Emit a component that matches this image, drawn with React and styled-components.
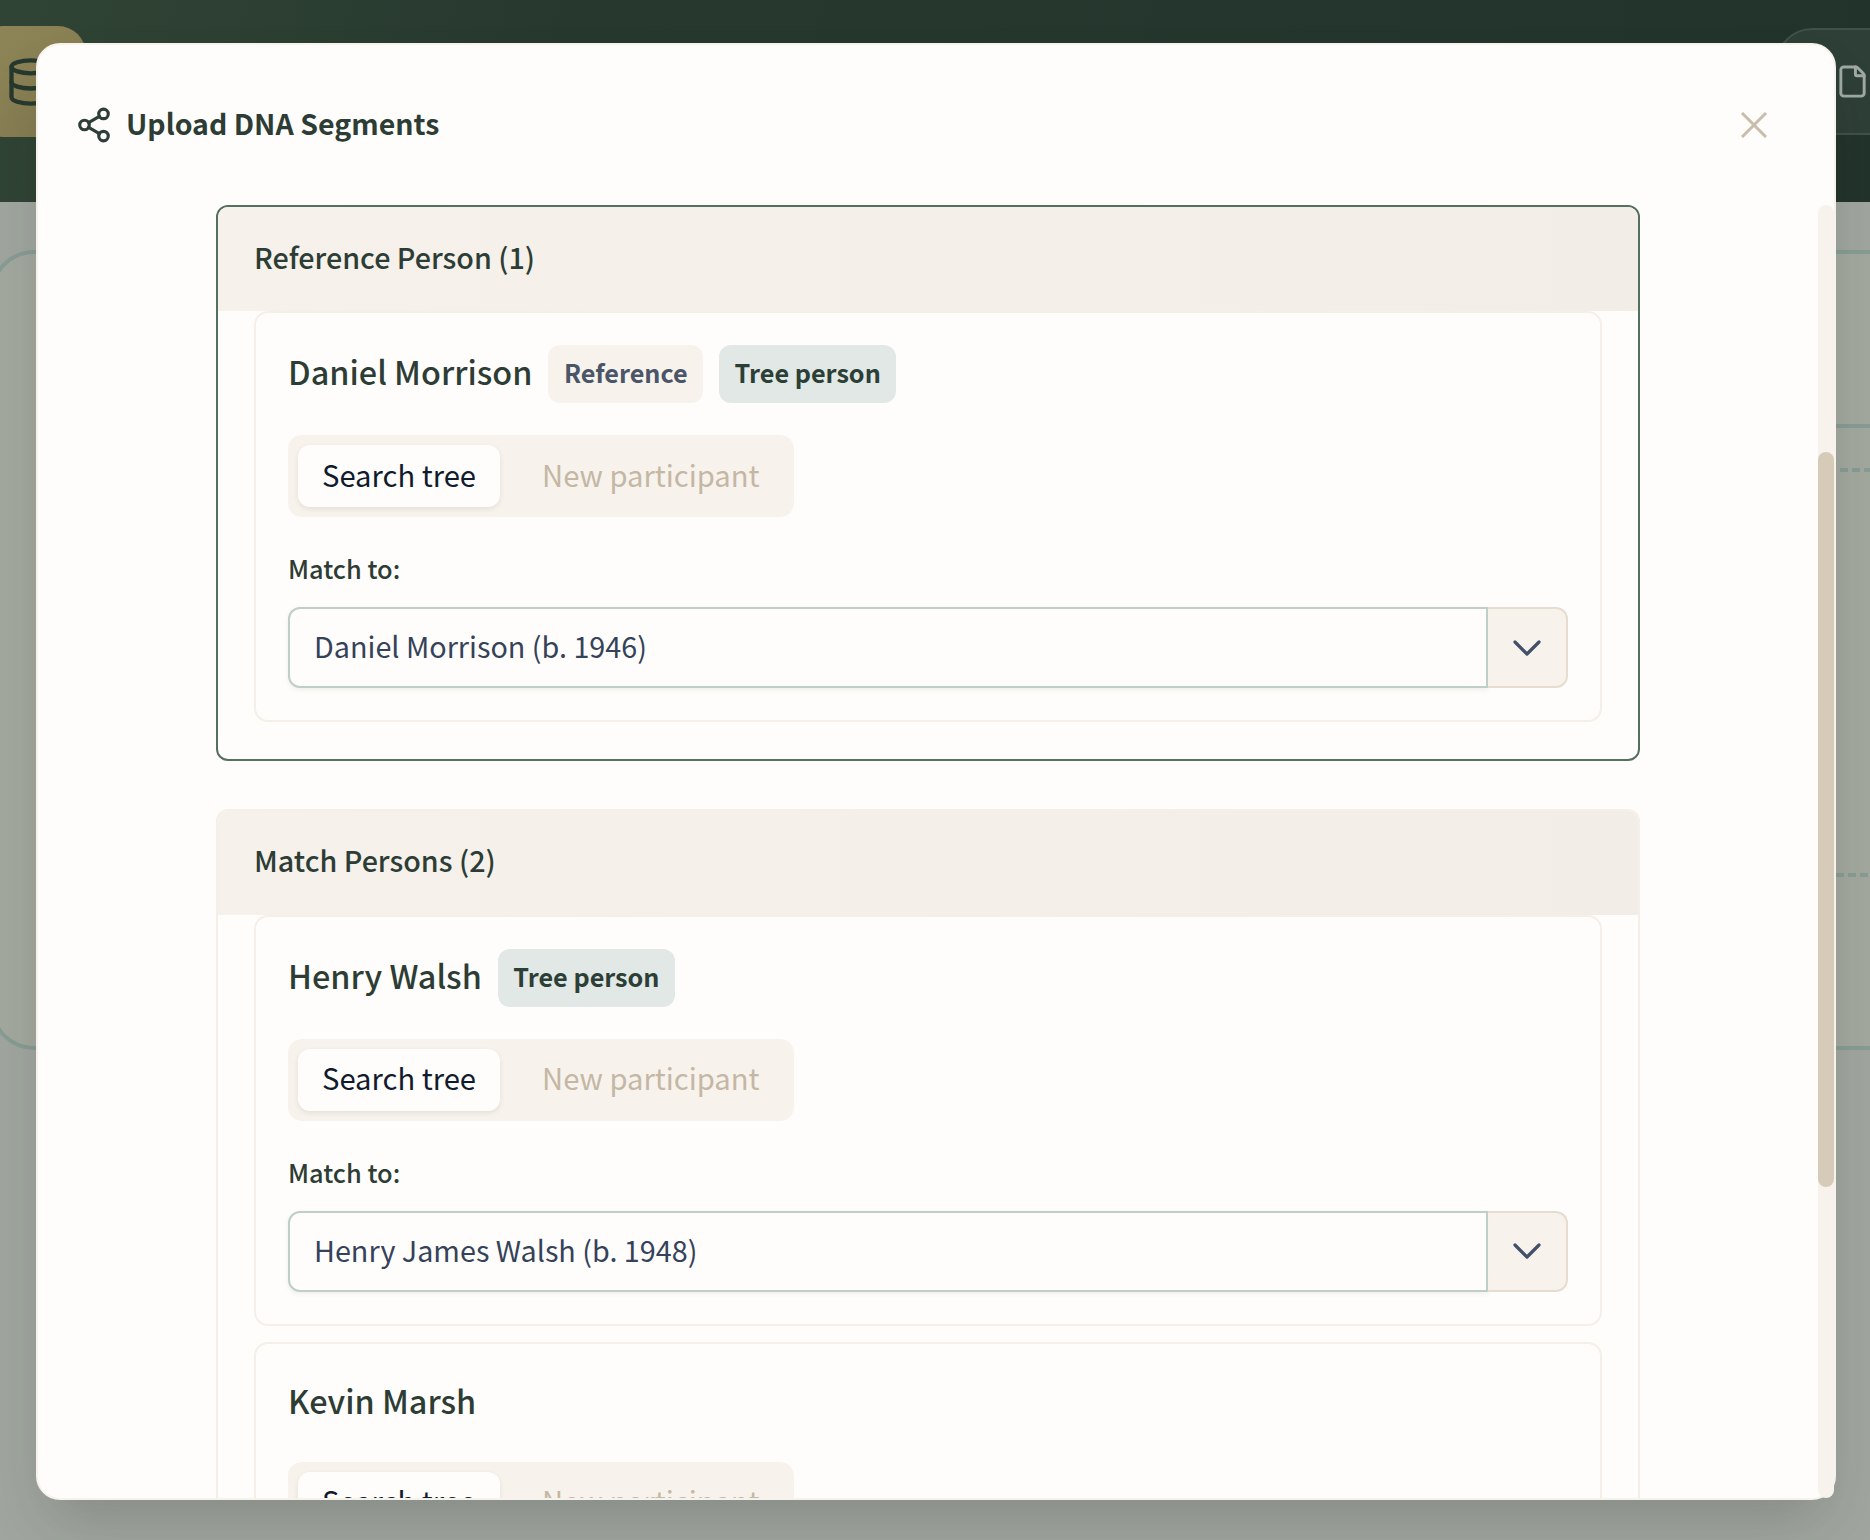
import React from "react";
import styled, { createGlobalStyle } from "styled-components";
import { ChevronDown, Database, File, Share2 } from "lucide-react";

const GlobalStyle = createGlobalStyle`
  * {
    margin: 0;
    padding: 0;
    box-sizing: border-box;
  }
  html, body {
    width: 100%;
    height: 100%;
    overflow: hidden;
    background: #a0a69f;
    font-family: "Noto Sans CJK SC", "Noto Sans", sans-serif;
  }
`;

const Page = styled.div`
  position: relative;
  width: 1870px;
  height: 1540px;
  overflow: hidden;
  background: #a0a69f;
`;

const TopBar = styled.header`
  display: flex;
  align-items: flex-start;
  justify-content: space-between;
  height: 202px;
  padding-top: 26px;
  background: linear-gradient(100deg, #304435 0%, #27392f 30%, #22332b 100%);
`;

const BrandTile = styled.div`
  display: flex;
  align-items: center;
  justify-content: center;
  flex: none;
  width: 111px;
  height: 111px;
  margin-left: -25px;
  border-radius: 28px;
  background: linear-gradient(135deg, #8e8658, #83794f);
  color: #27392f;
`;

const ToolChip = styled.div`
  display: flex;
  align-items: center;
  flex: none;
  width: 200px;
  height: 107px;
  margin-top: 2px;
  margin-right: -106px;
  padding-left: 57px;
  border: 2px solid #3f5148;
  border-radius: 36px;
  background: #2e3f37;
  color: #a0aaa3;
`;

const BackCard = styled.section`
  height: 800px;
  margin: 48px -80px 0 -10px;
  border: 4px solid #879c94;
  border-radius: 44px;
  background: #a3a89f;
`;

const BackCardHead = styled.div`
  height: 174px;
  margin-left: 1006px;
  border-bottom: 4px solid #879c94;
`;

const BackDash = styled.div`
  height: 4px;
  margin-top: ${(p) => p.$top}px;
  margin-left: ${(p) => p.$left}px;
  background: repeating-linear-gradient(90deg, #879c94 0 8px, transparent 8px 12px);
`;

const Overlay = styled.div`
  position: absolute;
  inset: 0;
  display: flex;
  padding: 43px 34px 40px 36px;
`;

const Modal = styled.div`
  position: relative;
  display: flex;
  flex-direction: column;
  width: 100%;
  border: 2px solid #f7f2ec;
  border-radius: 24px;
  background: #fffdfb;
  box-shadow: 0 30px 60px -15px rgba(30, 36, 32, 0.22);
`;

const ModalHead = styled.div`
  display: flex;
  align-items: center;
  flex: none;
  height: 160px;
  padding: 0 67px 0 37px;
  color: #2d3f38;
`;

const ModalTitle = styled.h2`
  flex: 1;
  margin-left: 13px;
  padding-bottom: 4px;
  font-size: 28.5px;
  line-height: 40px;
  font-weight: 700;
  color: #2d3d36;
`;

const CloseButton = styled.button`
  display: flex;
  border: 0;
  background: none;
  color: #c9bcaa;
`;

const ModalBody = styled.div`
  display: flex;
  flex-direction: column;
  gap: 48px;
  flex: 1;
  min-height: 0;
  overflow: hidden;
  padding: 0 194px 0 178px;
`;

const ScrollTrack = styled.div`
  position: absolute;
  top: 160px;
  right: 0;
  bottom: 0;
  width: 16px;
  padding-top: 247px;
  border-radius: 8px;
  background: #f7f3ec;
`;

const ScrollThumb = styled.div`
  height: 735px;
  border-radius: 8px;
  background: #d6cbb8;
`;

const Section = styled.section`
  flex: none;
  overflow: hidden;
  border: 2px solid ${(p) => (p.$active ? "#56705f" : "#f5efe8")};
  border-radius: 12px;
`;

const SectionHead = styled.div`
  display: flex;
  align-items: center;
  height: 104px;
  padding: 0 36px 6px;
  background: linear-gradient(90deg, #f6f2eb, #f2ede7);
  font-size: 28.7px;
  font-weight: 500;
  color: #2d3d36;
`;

const SectionBody = styled.div`
  display: flex;
  flex-direction: column;
  gap: 16px;
  padding: 0 36px 36.5px;
`;

const PersonCard = styled.article`
  padding: 32px;
  border: 2px solid #f5efe8;
  border-radius: 14px;
`;

const NameRow = styled.div`
  display: flex;
  align-items: center;
  gap: 16px;
  margin-bottom: 32px;
`;

const PersonName = styled.h3`
  padding-bottom: 6px;
  font-size: 32.4px;
  line-height: 48px;
  font-weight: 500;
  color: #2d3d36;
`;

const Badge = styled.span`
  display: flex;
  align-items: center;
  height: 58px;
  padding: 0 15.5px 4px;
  border-radius: 12px;
  font-size: 25.2px;
  font-weight: 600;
  background: ${(p) => (p.$tree ? "#e1e8e5" : "#f7f3ec")};
  color: ${(p) => (p.$tree ? "#2b3f36" : "#4a5568")};
`;

const TabGroup = styled.div`
  display: inline-flex;
  vertical-align: top;
  gap: 18px;
  height: 82px;
  padding: 10px;
  border-radius: 14px;
  background: #f7f3ec;
`;

const Tab = styled.button`
  height: 62px;
  padding: 0 24px 5px;
  border: 0;
  border-radius: 12px;
  font-family: inherit;
  font-size: 29.2px;
  background: ${(p) => (p.$on ? "#fffdfb" : "transparent")};
  color: ${(p) => (p.$on ? "#111b2e" : "#c4b7a5")};
  box-shadow: ${(p) => (p.$on ? "0 2px 5px rgba(60, 50, 30, 0.1)" : "none")};
`;

const FieldLabel = styled.label`
  display: block;
  margin: 34px 0 22px;
  font-size: 25.4px;
  line-height: 34px;
  font-weight: 500;
  color: #2d3d36;
`;

const SelectRow = styled.div`
  display: flex;
  height: 81px;
`;

const SelectInput = styled.input`
  flex: 1;
  min-width: 0;
  padding: 0 24px 4px;
  border: 2px solid #bdcfc8;
  border-radius: 12px 0 0 12px;
  outline: none;
  background: #fffdfb;
  font-family: inherit;
  font-size: 28.75px;
  color: #34425a;
  box-shadow: 0 2px 5px rgba(60, 50, 30, 0.07);
`;

const SelectButton = styled.button`
  display: flex;
  align-items: center;
  justify-content: center;
  flex: none;
  width: 80px;
  border: 2px solid #e6ddd0;
  border-left: 0;
  border-radius: 0 12px 12px 0;
  background: #f7f3ec;
  color: #43506a;
`;

const sections = [
  {
    title: "Reference Person (1)",
    active: true,
    people: [
      { name: "Daniel Morrison", reference: true, tree: true, match: "Daniel Morrison (b. 1946)" },
    ],
  },
  {
    title: "Match Persons (2)",
    people: [
      { name: "Henry Walsh", tree: true, match: "Henry James Walsh (b. 1948)" },
      { name: "Kevin Marsh", match: "" },
    ],
  },
];

const CloseIcon = () => (
  <svg width="26" height="26" viewBox="0 0 26 26" fill="none" stroke="currentColor" strokeWidth="3">
    <path d="M1 1l24 24M25 1L1 25" />
  </svg>
);

const Person = ({ person }) => (
  <PersonCard>
    <NameRow>
      <PersonName>{person.name}</PersonName>
      {person.reference && <Badge>Reference</Badge>}
      {person.tree && <Badge $tree>Tree person</Badge>}
    </NameRow>
    <TabGroup>
      <Tab $on>Search tree</Tab>
      <Tab>New participant</Tab>
    </TabGroup>
    <FieldLabel>Match to:</FieldLabel>
    <SelectRow>
      <SelectInput readOnly value={person.match} />
      <SelectButton>
        <ChevronDown size={48} strokeWidth={1.6} />
      </SelectButton>
    </SelectRow>
  </PersonCard>
);

const App = () => {
  return (
    <Page>
      <GlobalStyle />
      <TopBar>
        <BrandTile>
          <Database size={52} strokeWidth={2} />
        </BrandTile>
        <ToolChip>
          <File size={35} strokeWidth={2} />
        </ToolChip>
      </TopBar>
      <BackCard>
        <BackCardHead />
        <BackDash $top={40} $left={1006} />
        <BackDash $top={401} $left={1002} />
      </BackCard>
      <Overlay>
        <Modal>
          <ModalHead>
            <Share2 size={38} strokeWidth={2} />
            <ModalTitle>Upload DNA Segments</ModalTitle>
            <CloseButton>
              <CloseIcon />
            </CloseButton>
          </ModalHead>
          <ModalBody>
            {sections.map((section) => (
              <Section key={section.title} $active={section.active}>
                <SectionHead>{section.title}</SectionHead>
                <SectionBody>
                  {section.people.map((person) => (
                    <Person key={person.name} person={person} />
                  ))}
                </SectionBody>
              </Section>
            ))}
          </ModalBody>
          <ScrollTrack>
            <ScrollThumb />
          </ScrollTrack>
        </Modal>
      </Overlay>
    </Page>
  );
};

export default App;
